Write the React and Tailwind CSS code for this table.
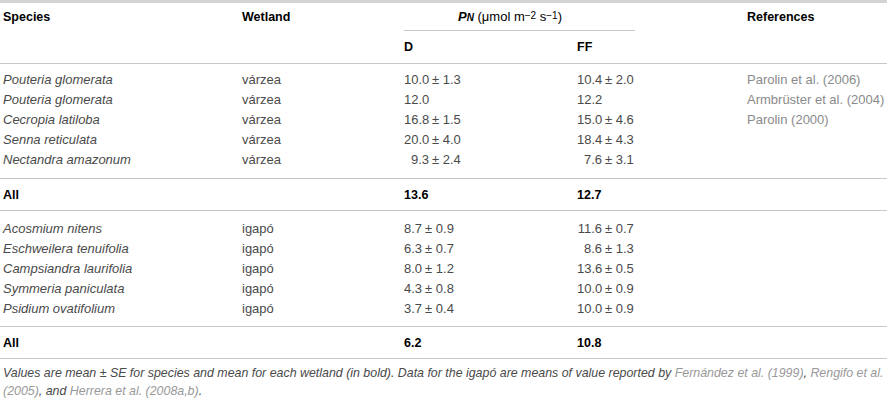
const varzea = [
  { sp: 'Pouteria glomerata', d: ['10.0', '1.3'], ff: ['10.4', '2.0'], ref: 'Parolin et al. (2006)' },
  { sp: 'Pouteria glomerata', d: ['12.0'], ff: ['12.2'], ref: 'Armbrüster et al. (2004)' },
  { sp: 'Cecropia latiloba', d: ['16.8', '1.5'], ff: ['15.0', '4.6'], ref: 'Parolin (2000)' },
  { sp: 'Senna reticulata', d: ['20.0', '4.0'], ff: ['18.4', '4.3'] },
  { sp: 'Nectandra amazonum', d: ['9.3', '2.4'], ff: ['7.6', '3.1'] },
];

const igapo = [
  { sp: 'Acosmium nitens', d: ['8.7', '0.9'], ff: ['11.6', '0.7'] },
  { sp: 'Eschweilera tenuifolia', d: ['6.3', '0.7'], ff: ['8.6', '1.3'] },
  { sp: 'Campsiandra laurifolia', d: ['8.0', '1.2'], ff: ['13.6', '0.5'] },
  { sp: 'Symmeria paniculata', d: ['4.3', '0.8'], ff: ['10.0', '0.9'] },
  { sp: 'Psidium ovatifolium', d: ['3.7', '0.4'], ff: ['10.0', '0.9'] },
];

const cols = 'grid grid-cols-[239px_162px_173px_170px_1fr] pl-[3px]';

// first number is right-aligned in a fixed box so the decimals line up
function Val({ v, narrow }) {
  return (
    <div className="whitespace-nowrap">
      <span className={narrow ? 'inline-block' : 'inline-block w-[25px] text-right'}>{v[0]}</span>
      {v[1] && <span className="ml-[3px]">±&nbsp;{v[1]}</span>}
    </div>
  );
}

function Row({ r, wet, narrowD }) {
  return (
    <div className={`${cols} h-5 items-center`}>
      <div className="italic">{r.sp}</div>
      <div>{wet}</div>
      <Val v={r.d} narrow={narrowD} />
      <Val v={r.ff} />
      <div className="text-[#8a8a8a] whitespace-nowrap">{r.ref}</div>
    </div>
  );
}

function AllRow({ d, ff }) {
  return (
    <div className={`${cols} h-[32px] items-center font-bold text-black text-[12.5px] border-b border-[#c8c8c8]`}>
      <div>All</div>
      <div />
      <div>{d}</div>
      <div>{ff}</div>
      <div />
    </div>
  );
}

export default function App() {
  return (
    <div className="w-[887px] h-[401px] bg-white text-[13px] leading-5 text-[#4a4a4a] font-['Liberation_Sans',Arial,sans-serif] overflow-hidden">
      <div className="border-t-[3px] border-[#d4d4d4]">
        <div className={`${cols} h-[28px] items-center font-bold text-black text-[12.5px]`}>
          <div>Species</div>
          <div>Wetland</div>
          <div className="col-span-2 self-stretch flex items-center border-b border-[#c8c8c8] w-[231px] pl-[54px] font-normal text-[13px] whitespace-nowrap">
            <span className="font-bold italic">P</span>
            <sub className="italic text-[10px] font-bold relative top-[1px]">N</sub>
            <span>&nbsp;(μmol m</span>
            <sup className="text-[10px] relative -top-[1px]">−2</sup>
            <span>&nbsp;s</span>
            <sup className="text-[10px] relative -top-[1px]">−1</sup>
            <span>)</span>
          </div>
          <div>References</div>
        </div>
        <div className={`${cols} h-[33px] items-center font-bold text-black text-[12.5px] border-b border-[#c8c8c8]`}>
          <div />
          <div />
          <div>D</div>
          <div>FF</div>
          <div />
        </div>
        <div className="pt-[6px] pb-[8px]">
          {varzea.map((r, i) => (
            <Row key={i} r={r} wet="várzea" />
          ))}
        </div>
        <div className="border-t border-[#c8c8c8]" />
        <AllRow d="13.6" ff="12.7" />
        <div className="pt-[8px] pb-[7px]">
          {igapo.map((r, i) => (
            <Row key={i} r={r} wet="igapó" narrowD />
          ))}
        </div>
        <div className="border-t border-[#c8c8c8]" />
        <AllRow d="6.2" ff="10.8" />
        <p className="pl-[3px] pt-[5px] italic text-[12.4px] leading-[18px] text-[#4a4a4a] whitespace-nowrap">
          Values are mean ± SE for species and mean for each wetland (in bold). Data for the igapó are means of value reported by{' '}
          <span className="text-[#999]">Fernández et al. (1999)</span>, <span className="text-[#999]">Rengifo et al.</span>
          <br />
          <span className="text-[#999]">(2005)</span>, and <span className="text-[#999]">Herrera et al. (2008a,b)</span>.
        </p>
      </div>
    </div>
  );
}
